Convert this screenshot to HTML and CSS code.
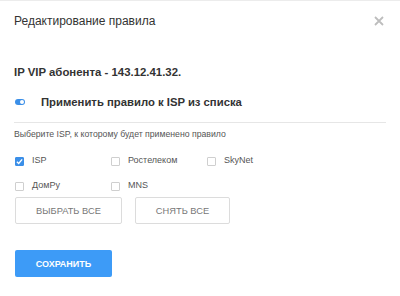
FILE: index.html
```html
<!DOCTYPE html>
<html lang="ru">
<head>
<meta charset="utf-8">
<link rel="stylesheet" href="styles.css">
</head>
<body>
<div class="modal">
  <div class="header">
    <span class="title">Редактирование правила</span>
    <svg class="close" width="10" height="10" viewBox="0 0 10 10"><path d="M1 1L9 9M9 1L1 9" stroke="#bdbdbd" stroke-width="1.8"/></svg>
  </div>
  <div class="ip">IP VIP абонента - 143.12.41.32.</div>
  <div class="toggle-row">
    <span class="toggle"><span class="knob"></span></span>
    <span class="toggle-label">Применить правило к ISP из списка</span>
  </div>
  <div class="divider"></div>
  <div class="hint">Выберите ISP, к которому будет применено правило</div>
  <div class="grid">
    <label class="cb"><span class="box checked"><svg width="7" height="7" viewBox="0 0 8 8"><path d="M1 4.2L3.1 6.2L7 1.6" fill="none" stroke="#fff" stroke-width="1.6"/></svg></span>ISP</label>
    <label class="cb"><span class="box"></span>Ростелеком</label>
    <label class="cb"><span class="box"></span>SkyNet</label>
    <label class="cb"><span class="box"></span>ДомРу</label>
    <label class="cb"><span class="box"></span>MNS</label>
  </div>
  <div class="btns">
    <button class="btn w107">ВЫБРАТЬ ВСЕ</button>
    <button class="btn w95">СНЯТЬ ВСЕ</button>
  </div>
  <button class="save">СОХРАНИТЬ</button>
</div>
</body>
</html>
```
FILE: styles.css
```css
* { box-sizing: border-box; }
html, body { margin: 0; padding: 0; background: #fff; }
body {
  width: 400px; height: 296px; overflow: hidden;
  font-family: "Liberation Sans", Arial, sans-serif;
  color: #333;
  border-top: 1px solid #ececec;
}
.modal { padding: 0 14px; }
.header {
  display: flex; justify-content: space-between; align-items: center;
  height: 40px;
}
.title { font-size: 12px; color: #333; }
.close { margin-right: 2px; }
.ip { margin-top: 23px; font-size: 11.4px; line-height: 16px; font-weight: bold; color: #333; height: 16px; }
.toggle-row { display: flex; align-items: center; margin-top: 14px; height: 16px; }
.toggle {
  width: 10px; height: 6px; border-radius: 3px; background: #3b8fe8;
  position: relative; margin-left: 1px; margin-right: 16px;
}
.knob {
  position: absolute; right: 1px; top: 1px; width: 4px; height: 4px;
  border-radius: 50%; background: #fff;
}
.toggle-label { font-size: 11.3px; font-weight: bold; color: #333; }
.divider { height: 1px; background: #e6e6e6; margin-top: 12px; width: 372px; }
.hint { font-size: 8.7px; line-height: 12px; color: #555; margin-top: 5px; height: 12px; }
.grid {
  display: grid; grid-template-columns: 96px 96px 96px; row-gap: 9px;
  margin-top: 12px; margin-left: 1px;
}
.cb { display: flex; align-items: center; font-size: 9px; color: #555; height: 16px; }
.box {
  width: 9px; height: 9px; border: 1px solid #cfcfcf; border-radius: 1px;
  margin-right: 8px; display: flex; align-items: center; justify-content: center;
  background: #fff; margin-top: 3px;
}
.box.checked { background: #3b8fe8; border-color: #3b8fe8; }
.btns { display: flex; gap: 13px; margin-top: 4px; margin-left: 1px; }
.btn {
  height: 27px; border: 1px solid #dcdcdc; border-radius: 2px; background: #fff;
  font-family: "Liberation Sans", Arial, sans-serif; font-size: 9.3px; color: #777;
  padding: 0;
}
.w107 { width: 107px; }
.w95 { width: 95px; }
.save {
  display: block;
  margin-top: 26px; margin-left: 1px; width: 97px; height: 27px; border: 0; border-radius: 2px;
  background: #3d9bf7; color: #fff; font-family: "Liberation Sans", Arial, sans-serif;
  font-size: 9px; font-weight: bold; padding: 0;
}
```
